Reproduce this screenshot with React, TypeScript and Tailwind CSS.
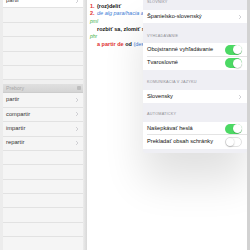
const WORDS = ['partir', 'compartir', 'impartir', 'repartir']

function Chevron({ className = '' }: { className?: string }) {
  return (
    <svg width="4" height="6" viewBox="0 0 4 6" className={className}>
      <path d="M1 1 L3 3 L1 5" fill="none" stroke="#c7c7cc" strokeWidth="0.8" />
    </svg>
  )
}

function Toggle({ on }: { on: boolean }) {
  return on ? (
    <div className="w-[17px] h-[10px] rounded-full bg-[#4cd964] relative">
      <div className="absolute right-[0.5px] top-[0.5px] w-[9px] h-[9px] rounded-full bg-white shadow-[0_0.5px_1px_rgba(0,0,0,0.3)]" />
    </div>
  ) : (
    <div className="w-[17px] h-[10px] rounded-full bg-white border border-[#e2e2e2] relative">
      <div className="absolute left-0 top-0 w-[8px] h-[8px] rounded-full bg-white shadow-[0_0.5px_1.5px_rgba(0,0,0,0.35)]" />
    </div>
  )
}

function Caption({ text, h }: { text: string; h: string }) {
  return (
    <div className={`${h} flex items-end pb-[5px] pl-[4px] text-[3.8px] text-[#8e8e93] tracking-[0.2px] leading-none`}>
      {text}
    </div>
  )
}

function Row({ label, right, border }: { label: string; right: React.ReactNode; border?: boolean }) {
  return (
    <div className="h-[13.3px] bg-white flex items-center pl-[4px] pr-[5px] relative">
      <span className="flex-1 text-[5.7px] text-[#111] leading-none">{label}</span>
      {right}
      {border && <div className="absolute left-[4px] right-0 bottom-0 h-px bg-[#e4e4e4]" />}
    </div>
  )
}

function ListRow({ word, white }: { word?: string; white?: boolean }) {
  return (
    <div
      className={`h-[14.4px] shrink-0 flex items-center pl-[3px] pr-[4px] border-b border-[#e2e2e2] ${
        white ? 'bg-white' : 'bg-[#f5f5f5]'
      }`}
    >
      <span className="flex-1 text-[5.8px] text-[#333] leading-none">{word}</span>
      {word && <Chevron />}
    </div>
  )
}

export default function App() {
  return (
    <div
      className="w-[250px] h-[250px] relative overflow-hidden bg-white flex"
      style={{ fontFamily: '"Liberation Sans", Arial, sans-serif' }}
    >
      {/* left word list */}
      <div className="w-[87px] shrink-0 bg-[#ececec] flex">
        <div className="w-[80px] ml-[3px] flex flex-col -mt-[6px] bg-[#f0f0f0]">
          <ListRow word="partir" white />
          <ListRow />
          <ListRow />
          <ListRow />
          <ListRow />
          <ListRow />
          <div className="h-[3.7px] shrink-0" />
          <div className="h-[9.3px] shrink-0 bg-gradient-to-b from-[#e0e0e0] to-[#d4d4d4] flex items-center pl-[3px] pr-[2px] border-b border-[#cccccc]">
            <span className="flex-1 text-[5.2px] text-[#a8a8a8] leading-none">Prebory</span>
            <div className="w-[4px] h-[4px] rounded-[1px] bg-[#bdbdbd]" />
          </div>
          {WORDS.map((w) => (
            <ListRow key={w} word={w} />
          ))}
          {Array.from({ length: 7 }).map((_, i) => (
            <ListRow key={i} />
          ))}
        </div>
        <div className="w-[4px] bg-gradient-to-r from-[#ececec] to-[#d8d8d8]" />
      </div>

      {/* dictionary entry */}
      <div className="flex-1 pl-[3px] pt-[2.5px] text-[5.5px] leading-[7.7px] whitespace-nowrap">
        <div className="flex">
          <span className="w-[7px] text-[#e0302f] font-bold">1.</span>
          <span className="font-bold text-[#111]">(roz)deliť</span>
        </div>
        <div className="flex">
          <span className="w-[7px] text-[#e0302f] font-bold">2.</span>
          <span className="italic text-[#3a7bd5]">de alg para/hacia alg</span>
        </div>
        <div className="italic text-[#3cb043] text-[5px]">pml</div>
        <div className="pl-[7px] font-bold text-[#111]">rozbiť sa, zlomiť sa</div>
        <div className="italic text-[#3cb043] text-[5px]">phr</div>
        <div className="pl-[7px] font-bold">
          <span className="text-[#e0302f]">a partir de</span> <span className="text-[#111]">od</span>{' '}
          <span className="text-[#3a7bd5] font-normal">(desde)</span>
        </div>
      </div>

      {/* settings popover */}
      <div className="absolute left-[143px] top-0 w-[104px] h-[153px] bg-[#efeff4] rounded-b-[3px] shadow-[0_28px_40px_rgba(0,0,0,0.12)]">
        <Caption text="SLOVNÍKY" h="h-[10px]" />
        <Row label="Španielsko-slovenský" right={<Chevron />} />
        <Caption text="VYHĽADÁVANIE" h="h-[20px]" />
        <Row label="Obojstranné vyhľadávanie" right={<Toggle on />} border />
        <Row label="Tvaroslovné" right={<Toggle on />} />
        <Caption text="KOMUNIKÁCIA V JAZYKU" h="h-[20px]" />
        <Row label="Slovensky" right={<Chevron />} />
        <Caption text="AUTOMATICKY" h="h-[19px]" />
        <Row label="Našepkávať heslá" right={<Toggle on />} border />
        <Row label="Prekladať obsah schránky" right={<Toggle on={false} />} />
      </div>

      {/* right edge */}
      <div className="absolute right-0 top-0 w-[3px] h-full bg-[#d2d2d2]" />
    </div>
  )
}
